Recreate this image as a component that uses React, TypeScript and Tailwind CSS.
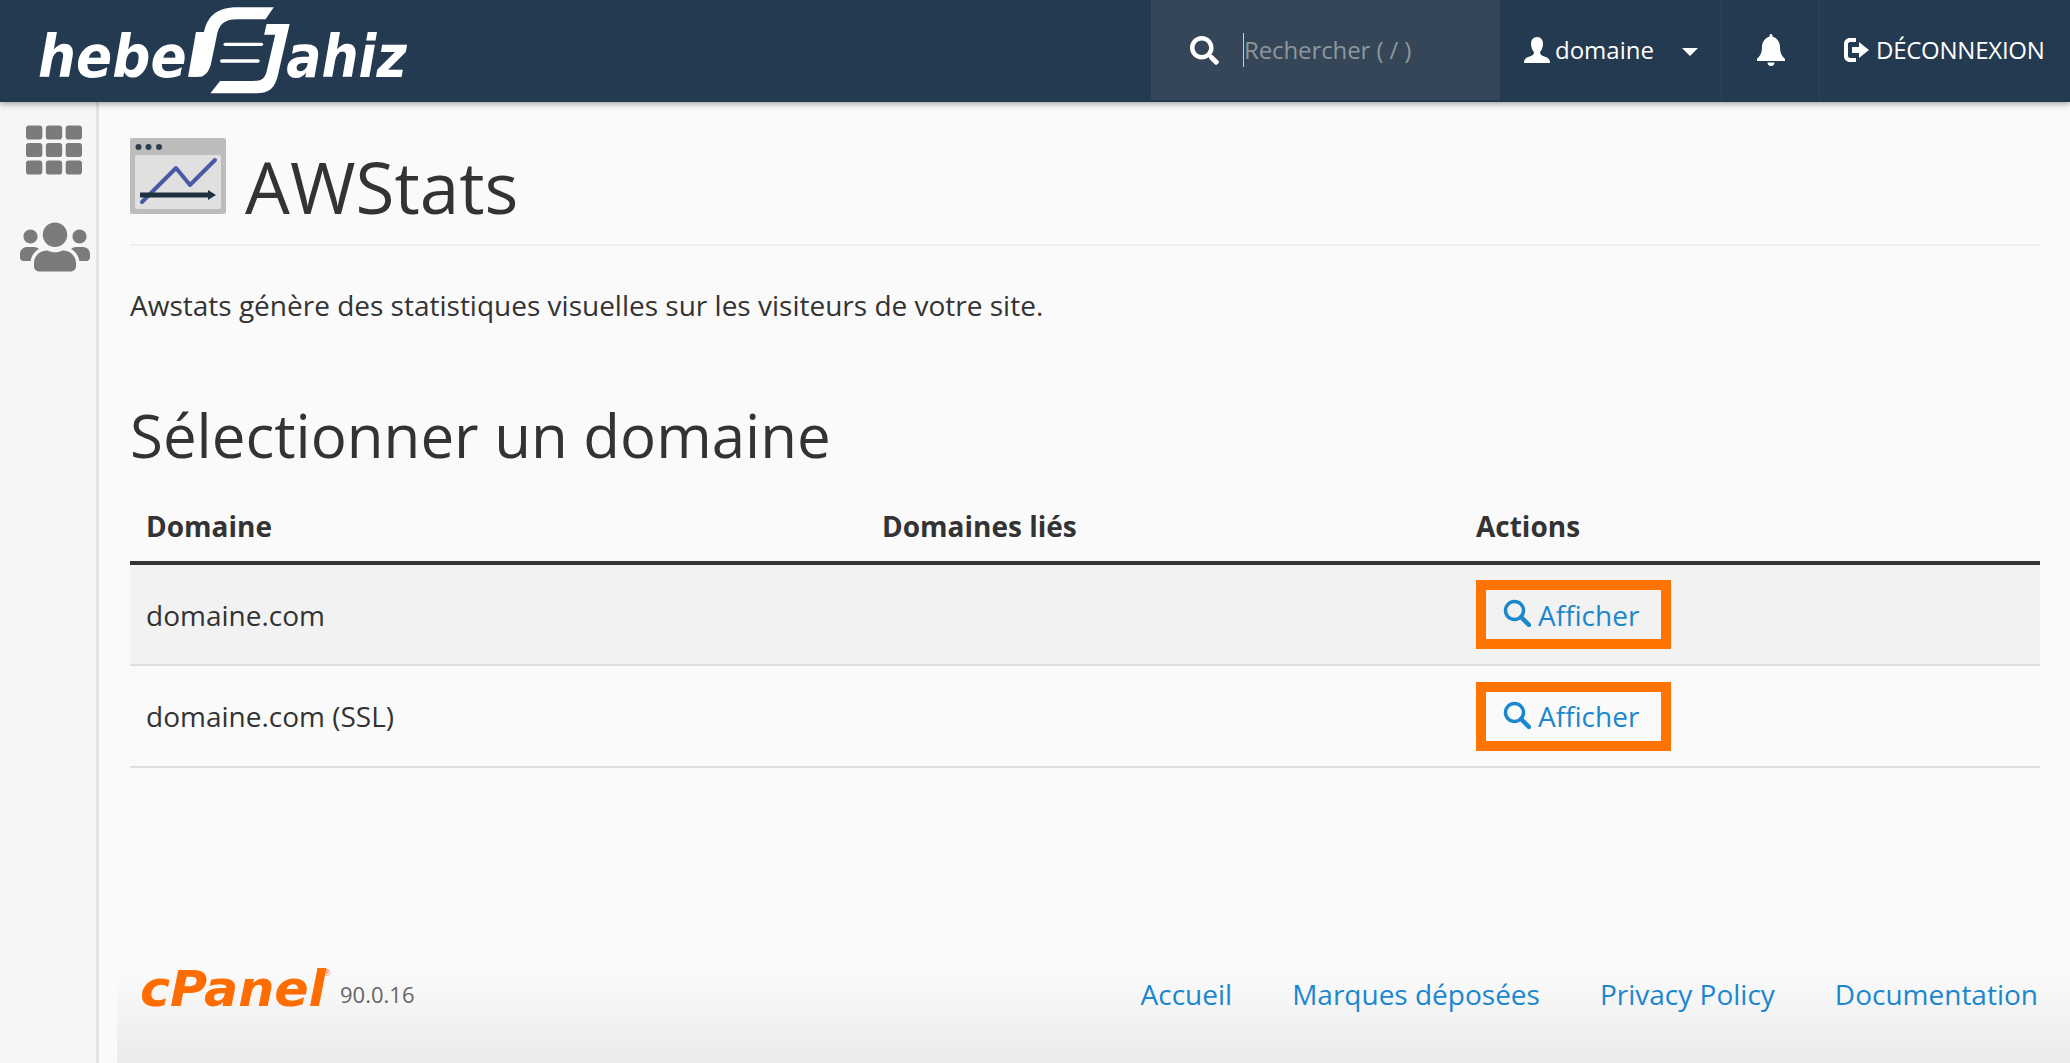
import { FaSearch, FaTh, FaUsers } from "react-icons/fa";

function HebergLogo() {
  return (
    <svg width="379" height="92" viewBox="100 15 1100 276" preserveAspectRatio="none" className="shrink-0 overflow-visible">
      <text x="112" y="230" fontFamily="'DejaVu Sans', sans-serif" fontWeight="700" fontStyle="italic" fontSize="176" fill="#fff" textLength="484" lengthAdjust="spacingAndGlyphs">hebel</text>
      <text x="832" y="230" fontFamily="'DejaVu Sans', sans-serif" fontWeight="700" fontStyle="italic" fontSize="176" fill="#fff" textLength="350" lengthAdjust="spacingAndGlyphs">ahiz</text>
      <path d="M796 22 L690 22 C630 22 600 50 592 105 L575 200 C572 220 565 228 548 230 L585 230 C600 226 610 210 614 190 L630 110 C636 75 650 58 690 58 L772 58 Z" fill="#fff" />
      <path d="M842 72 L775 72 L768 104 L800 104 L775 215 C770 235 760 243 735 243 L640 243 L612 280 L745 280 C785 280 800 262 808 225 Z" fill="#fff" />
      <rect x="650" y="128" width="115" height="10" rx="5" fill="#fff" />
      <rect x="640" y="178" width="115" height="10" rx="5" fill="#fff" />
    </svg>
  );
}

function ChartIcon() {
  return (
    <svg width="96" height="76" viewBox="0 0 96 76" className="shrink-0">
      <rect width="96" height="76" rx="2" fill="#bcbcbc" />
      <rect x="5" y="17" width="86" height="54" rx="2" fill="#e0e0e0" />
      <circle cx="8.500" cy="9" r="3" fill="#2c3e50" />
      <circle cx="18.500" cy="9" r="3" fill="#2c3e50" />
      <circle cx="29" cy="9" r="3" fill="#2c3e50" />
      <polyline points="12,64 46,30 60,47 85,22" fill="none" stroke="#4a5ba6" strokeWidth="4" strokeLinecap="round" strokeLinejoin="round" />
      <path d="M10 54.500 H78 V52 L86 57 L78 62 V59.500 H10 Z" fill="#1f3140" />
    </svg>
  );
}

function UserIcon() {
  return (
    <svg width="26" height="26" viewBox="0 0 26 26" className="shrink-0">
      <path d="M13 0 C9 0 7 3 7 7 C7 11 9 14 10 15 C10 17 9 18 7 19 C3 20.500 0 21 0 26 H26 C26 21 23 20.500 19 19 C17 18 16 17 16 15 C17 14 19 11 19 7 C19 3 17 0 13 0 Z" fill="#fff" />
    </svg>
  );
}

function BellIcon() {
  return (
    <svg width="28" height="32" viewBox="0 0 28 32" className="shrink-0">
      <path d="M14 0 C15 0 15.500 1 15.500 2.500 C20 4 23 8 23 13 C23 19 25 22 28 25 V27 H0 V25 C3 22 5 19 5 13 C5 8 8 4 12.500 2.500 C12.500 1 13 0 14 0 Z M10.500 28.500 H17.500 C17.500 31 16 32 14 32 C12 32 10.500 31 10.500 28.500 Z" fill="#fff" />
    </svg>
  );
}

function LogoutIcon() {
  return (
    <svg width="26" height="24" viewBox="0 0 26 24" className="shrink-0">
      <path d="M12 0 H6 C2.500 0 0 2.500 0 6 V18 C0 21.500 2.500 24 6 24 H12 V20 H6 C5 20 4 19 4 18 V6 C4 5 5 4 6 4 H12 Z" fill="#fff" />
      <path d="M8 9 H15 V4 L25 12 L15 20 V15 H8 Z" fill="#fff" />
    </svg>
  );
}

function CpanelLogo() {
  return (
    <svg width="192" height="46" viewBox="0 0 192 46" className="shrink-0 overflow-visible">
      <text x="-1" y="40" fontFamily="'DejaVu Sans', sans-serif" fontWeight="700" fontStyle="italic" fontSize="50" fill="#ff6c00" textLength="186" lengthAdjust="spacingAndGlyphs">cPanel</text>
      <text x="183" y="10" fontFamily="'Liberation Sans', sans-serif" fontSize="9" fill="#ff6c00">®</text>
    </svg>
  );
}

function ViewButton() {
  return (
    <a className="inline-flex items-center box-border w-[195px] h-[69px] border-[10px] border-[#ff7300] pl-[17px] text-[28px] text-[#1b87cd] gap-[7px]">
      <svg width="28" height="28" viewBox="0 0 28 28" className="shrink-0 mt-[-3px]">
        <circle cx="11.500" cy="11.500" r="9" fill="none" stroke="#1b87cd" strokeWidth="3.500" />
        <path d="M18 18 L26 26" stroke="#1b87cd" strokeWidth="4.500" strokeLinecap="round" />
      </svg>
      Afficher
    </a>
  );
}

export default function App() {
  return (
    <div className="h-screen overflow-hidden flex flex-col bg-[#fafafa] text-[#333] font-['Open_Sans',sans-serif]">
      <header className="relative z-20 h-[102px] shrink-0 flex bg-[#243a50] shadow-[0_2px_6px_rgba(0,0,0,0.35)]">
        <div className="flex items-center pl-[34px] flex-1">
          <HebergLogo />
        </div>
        <div className="w-[349px] h-[100px] bg-[#344658] flex items-center pl-[39px]">
          <FaSearch className="text-white text-[29px] shrink-0" />
          <div className="ml-[24px] h-[34px] border-l border-[#c8cdd2] flex items-center text-[24px] text-[#8e969d] tracking-[-0.1px]">Rechercher ( / )</div>
        </div>
        <div className="w-[222px] h-[100px] flex items-center pl-[24px] text-white text-[24px] border-r border-[#304559]">
          <UserIcon />
          <span className="ml-[5px]">domaine</span>
          <span className="ml-[28px] mt-[3px] w-0 h-0 border-x-[8px] border-x-transparent border-t-[8px] border-t-white" />
        </div>
        <div className="w-[98px] h-[100px] flex items-center justify-center border-r border-[#304559]">
          <BellIcon />
        </div>
        <div className="flex-1 max-w-[250px] h-[100px] flex items-center pl-[24px] text-white text-[24px] tracking-[-0.25px]">
          <LogoutIcon />
          <span className="ml-[6px]">DÉCONNEXION</span>
        </div>
      </header>

      <div className="flex-1 flex min-h-0">
        <aside className="w-[99px] shrink-0 bg-[#f6f6f6] border-r-[3px] border-[#e2e2e2] flex flex-col items-center pt-[20px]">
          <FaTh className="text-[#7b7b7b] text-[56px] ml-[12px]" />
          <FaUsers className="text-[#7b7b7b] text-[70px] mt-[34px] ml-[13px]" />
        </aside>

        <main className="flex-1 min-w-0 flex flex-col">
          <div className="flex-1 pl-[31px] pr-[30px] pt-[37px]">
            <div className="flex items-end h-[107px] border-b-2 border-[#efefef] gap-[19px]">
              <div className="mb-[30px]"><ChartIcon /></div>
              <h1 className="text-[71px] leading-[96px] mb-[9px]">AWStats</h1>
            </div>
            <p className="mt-[39px] text-[28px] leading-[40px]">Awstats génère des statistiques visuelles sur les visiteurs de votre site.</p>
            <h2 className="mt-[70px] text-[60px] leading-[80px]">Sélectionner un domaine</h2>
            <table className="w-full table-fixed border-collapse mt-[15px] text-[28px]">
              <thead>
                <tr className="h-[73px] border-b-4 border-[#333] text-left">
                  <th className="w-[736px] pl-[16px] font-bold">Domaine</th>
                  <th className="w-[594px] pl-[16px] font-bold">Domaines liés</th>
                  <th className="pl-[16px] font-bold">Actions</th>
                </tr>
              </thead>
              <tbody>
                <tr className="h-[102px] bg-[#f2f2f2] border-b-2 border-[#dedede]">
                  <td className="pl-[16px]">domaine.com</td>
                  <td></td>
                  <td className="pl-[16px]"><ViewButton /></td>
                </tr>
                <tr className="h-[102px] border-b-2 border-[#dedede]">
                  <td className="pl-[16px]">domaine.com (SSL)</td>
                  <td></td>
                  <td className="pl-[16px]"><ViewButton /></td>
                </tr>
              </tbody>
            </table>
          </div>
          <footer className="ml-[18px] h-[96px] shrink-0 bg-gradient-to-b from-[#fbfbfb] to-[#ebebeb] flex items-start pl-[24px] pr-[32px]">
            <div className="flex items-center h-[46px] mt-[-1px]">
              <CpanelLogo />
              <span className="ml-[7px] mt-[10px] text-[22px] text-[#666]">90.0.16</span>
            </div>
            <nav className="ml-auto flex gap-[60px] text-[28px] text-[#1b87cd] mt-[6px]">
              <a>Accueil</a>
              <a>Marques déposées</a>
              <a>Privacy Policy</a>
              <a>Documentation</a>
            </nav>
          </footer>
        </main>
      </div>
    </div>
  );
}
